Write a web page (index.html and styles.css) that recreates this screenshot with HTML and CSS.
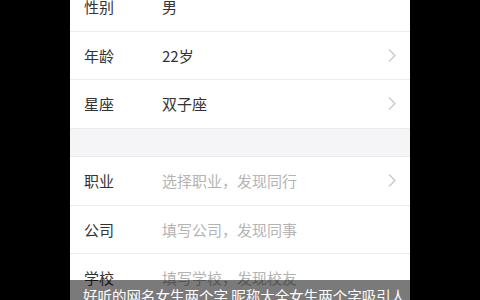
FILE: index.html
```html
<!DOCTYPE html>
<html lang="zh-CN">
  <head>
    <meta charset="UTF-8" />
    <meta name="viewport" content="width=device-width, initial-scale=1.0" />
    <title>个人资料</title>
    <link rel="stylesheet" href="styles.css">
  </head>
  <body>
<div class="screen">
  <div class="list">
    <div class="row">
      <span class="label">性别</span>
      <span class="value">男</span>
    </div>
    <div class="row">
      <span class="label">年龄</span>
      <span class="value">22岁</span>
      <svg class="arrow" viewBox="0 0 8 14"><path d="M1 1l6 6-6 6" /></svg>
    </div>
    <div class="row">
      <span class="label">星座</span>
      <span class="value">双子座</span>
      <svg class="arrow" viewBox="0 0 8 14"><path d="M1 1l6 6-6 6" /></svg>
    </div>

    <!-- 分隔区 -->
    <div class="gap"></div>

    <div class="row">
      <span class="label">职业</span>
      <span class="value empty">选择职业，发现同行</span>
      <svg class="arrow" viewBox="0 0 8 14"><path d="M1 1l6 6-6 6" /></svg>
    </div>
    <div class="row">
      <span class="label">公司</span>
      <span class="value empty">填写公司，发现同事</span>
    </div>
    <div class="row">
      <span class="label">学校</span>
      <span class="value empty">填写学校，发现校友</span>
    </div>
  </div>

  <!-- 标题遮罩 -->
  <div class="caption">好听的网名女生两个字 昵称大全女生两个字吸引人</div>
</div>
  </body>
</html>
```

FILE: styles.css
```css
* {
  margin: 0;
  padding: 0;
  box-sizing: border-box;
  font-family: "Noto Sans CJK SC", "Noto Sans", sans-serif;
}

body {
  background-color: #000;
  width: 480px;
  height: 300px;
  overflow: hidden;
}

.screen {
  position: relative;
  width: 340px;
  height: 300px;
  margin: 0 auto;
  background-color: #fff;
  overflow: hidden;
}

.list {
  margin-top: -17px;
}

.row {
  display: flex;
  align-items: center;
  height: 48.5px;
  padding: 0 14px 0 14px;
  border-bottom: 1px solid #ececec;
  background-color: #fff;
  font-size: 15px;
  color: #333;
}

.label {
  width: 78px;
}

.value {
  flex: 1;
}

.value.empty {
  color: #b4b4b4;
}

.arrow {
  width: 8px;
  height: 15px;
}

.arrow path {
  fill: none;
  stroke: #c8c8cc;
  stroke-width: 1.3;
}

.gap {
  height: 28.5px;
  background-color: #f5f5f7;
  border-bottom: 1px solid #ececec;
}

.caption {
  position: absolute;
  left: 0;
  right: 0;
  bottom: 0;
  height: 20px;
  padding: 9px 0 0 13px;
  background-color: rgba(0, 0, 0, 0.52);
  color: #fff;
  font-size: 14.5px;
  line-height: 1;
  white-space: nowrap;
  overflow: hidden;
}
```
